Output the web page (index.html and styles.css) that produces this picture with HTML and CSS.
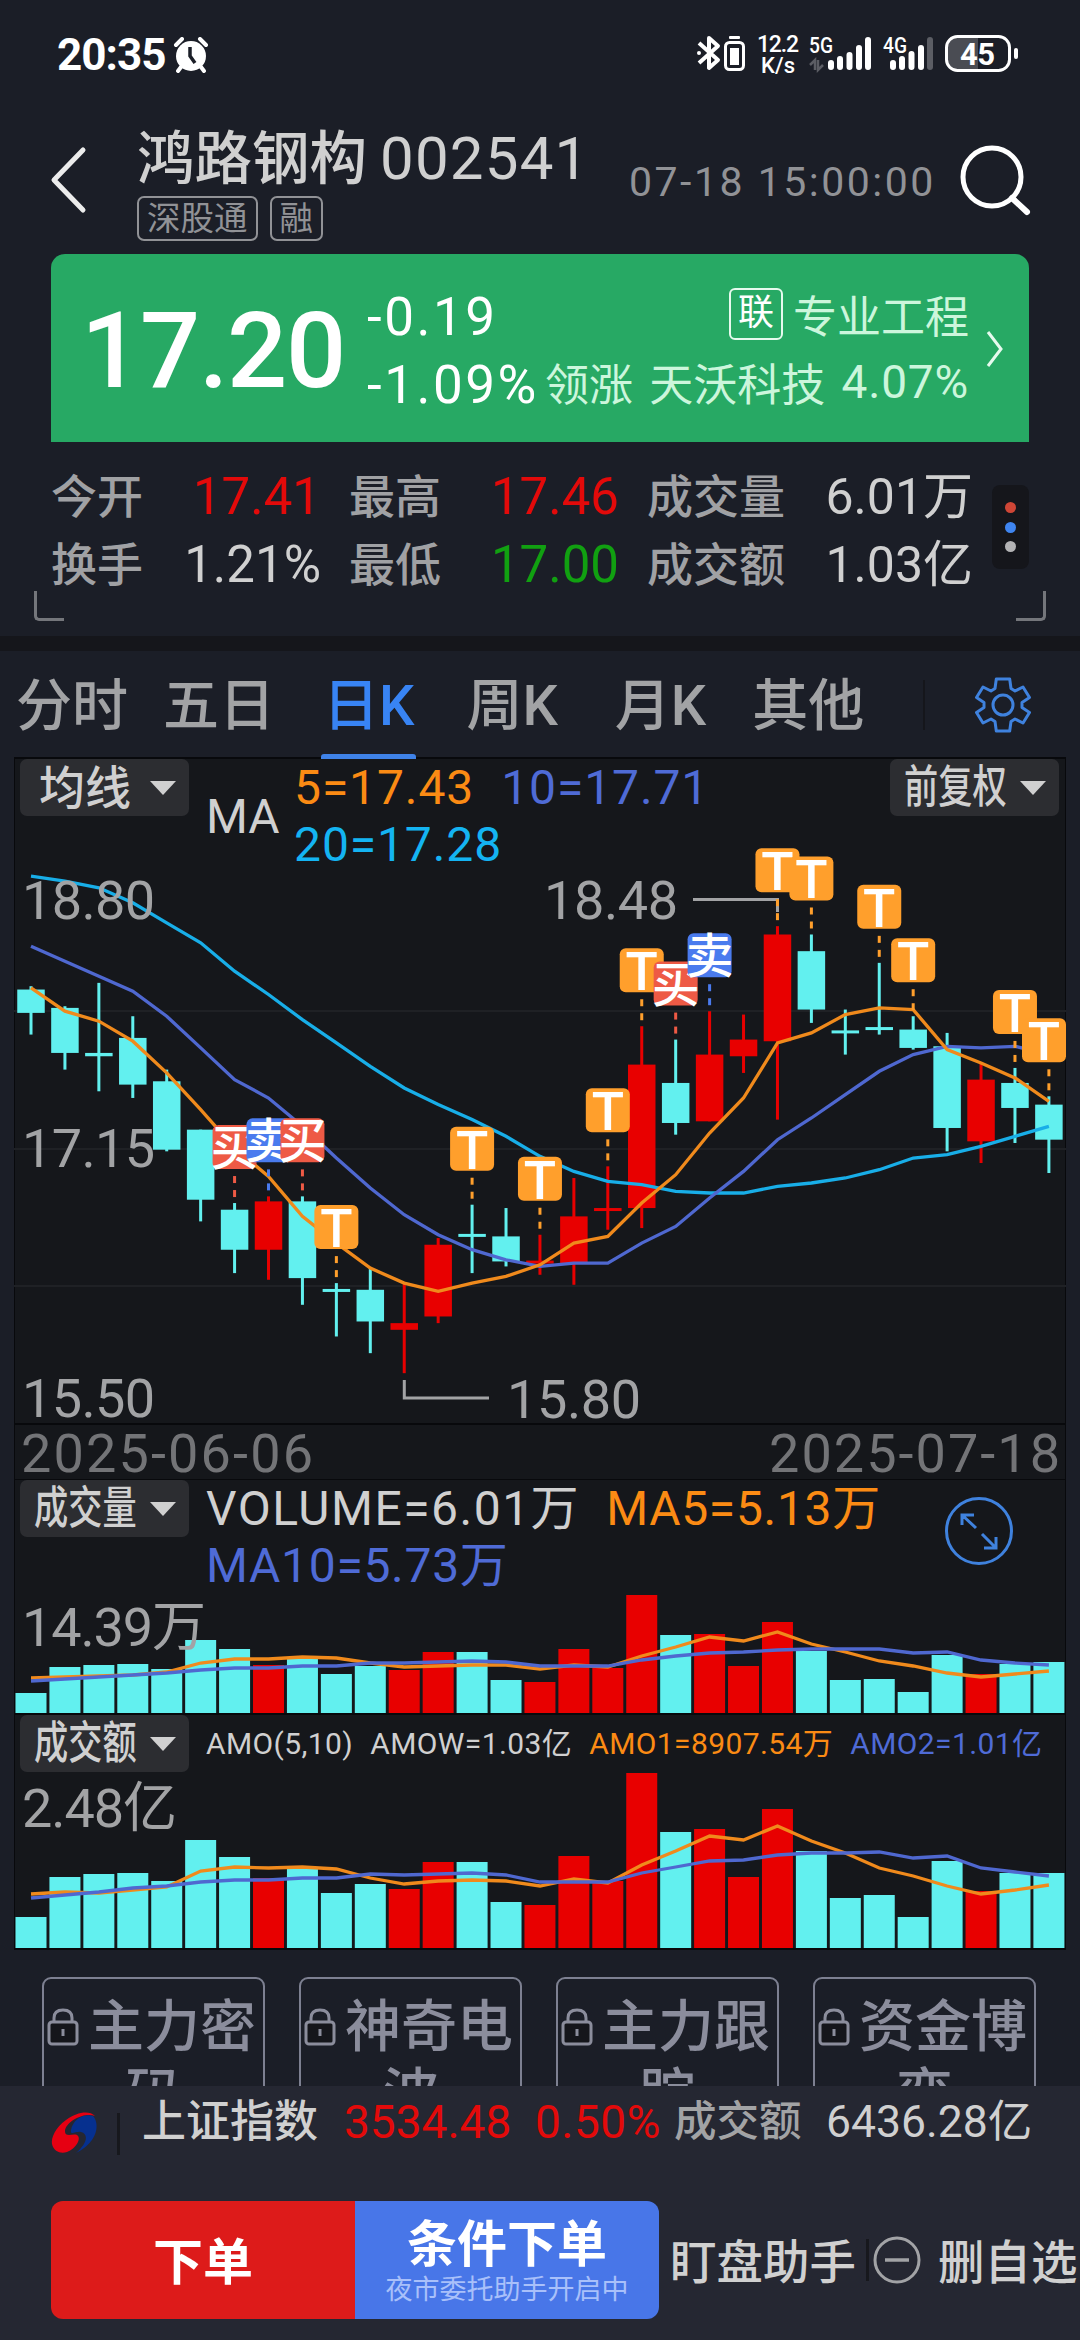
FILE: index.html
```html
<!DOCTYPE html>
<html lang="zh-CN">
<head>
    <meta charset="UTF-8">
    <meta name="viewport" content="width=device-width, initial-scale=1.0">
    <title>鸿路钢构 002541</title>
    <link rel="stylesheet" href="styles.css">
</head>
<body>

    <div class="status-bar">
        <span class="time">20:35</span>
        <svg class="alarm" width="36" height="36" viewBox="0 0 36 36">
            <circle cx="18" cy="19" r="15" fill="#fff"/>
            <path d="M3 8 L9 2 M33 8 L27 2 M8 30 L5 34 M28 30 L31 34" stroke="#fff" stroke-width="4" stroke-linecap="round"/>
            <path d="M17 10 V19 L22 26" stroke="#1b1e27" stroke-width="3.5" fill="none"/>
        </svg>
        <svg class="status-icons" width="340" height="50" viewBox="690 28 340 50">
            <path d="M699 43 L718 60 L709 68 V38 L718 46 L699 63" fill="none" stroke="#fff" stroke-width="4" stroke-linejoin="round"/>
            <circle cx="699" cy="53" r="2" fill="#fff"/>
            <rect x="725.500" y="42.500" width="18" height="27" rx="4" fill="none" stroke="#fff" stroke-width="3"/>
            <rect x="730" y="48" width="9" height="17" fill="#fff"/>
            <rect x="729" y="36" width="11" height="3" rx="1" fill="#fff"/>
            <text x="757" y="52" font-size="23" textLength="42">12.2</text>
            <text x="761" y="73" font-size="22" textLength="34">K/s</text>
            <text x="809" y="53" font-size="22" textLength="24" lengthAdjust="spacingAndGlyphs">5G</text>
            <path d="M815 70 V60 L810 65 M818 60 V70 L823 65" fill="none" stroke="#5b5d64" stroke-width="2.500"/>
            <g stroke="#fff" stroke-width="6" stroke-linecap="round">
                <path d="M831 63 V67 M840 59 V67 M849.500 55 V67 M859 48 V67 M868 40 V67"/>
                <path d="M893 63 V67 M902 59 V67 M911.500 54 V67 M921 48 V67"/>
                <path d="M930 40 V67" stroke="#5b5d64"/>
            </g>
            <text x="883" y="53" font-size="22" textLength="24" lengthAdjust="spacingAndGlyphs">4G</text>
            <path d="M978 37 H957 Q947 37 947 46 V61 Q947 70 957 70 H978 Z" fill="#4a4c53"/>
            <rect x="946.500" y="36.500" width="63" height="34" rx="11" fill="none" stroke="#fff" stroke-width="3"/>
            <rect x="1014" y="48" width="4" height="11" rx="2" fill="#fff"/>
            <text x="960" y="65" font-size="31" font-weight="700" textLength="35">45</text>
        </svg>
    </div>

    <header class="header">
        <svg class="back" width="40" height="68" viewBox="0 0 40 68">
            <path d="M35 4 L6 34 L35 64" fill="none" stroke="#ececec" stroke-width="5" stroke-linecap="round" stroke-linejoin="round"/>
        </svg>
        <div class="stock">
            <div class="stock-name">鸿路钢构<span class="stock-code">002541</span></div>
            <div class="tags"><span class="tag">深股通</span><span class="tag">融</span></div>
        </div>
        <span class="quote-time">07-18 15:00:00</span>
        <svg class="search" width="74" height="74" viewBox="0 0 74 74">
            <circle cx="34" cy="33" r="29" fill="none" stroke="#fff" stroke-width="5"/>
            <path d="M54 54 L69 68" stroke="#fff" stroke-width="6" stroke-linecap="round"/>
        </svg>
    </header>

    <section class="price-card">
        <div class="price">17.20</div>
        <div class="change">
            <div>-0.19</div>
            <div>-1.09%</div>
        </div>
        <div class="sector">
            <div class="sector-row"><span class="link-tag">联</span>专业工程</div>
            <div class="sector-row"><span>领涨</span><span>天沃科技</span><span class="num">4.07%</span></div>
        </div>
        <svg class="arrow" width="20" height="40" viewBox="0 0 20 40">
            <path d="M3 3 L16 20 L3 37" fill="none" stroke="#e6faee" stroke-width="3"/>
        </svg>
    </section>

    <section class="stats">
        <div class="stats-grid">
            <span class="label">今开</span><span class="value up">17.41</span>
            <span class="label">最高</span><span class="value up">17.46</span>
            <span class="label">成交量</span><span class="value last">6.01万</span>
            <span class="label">换手</span><span class="value">1.21%</span>
            <span class="label">最低</span><span class="value down">17.00</span>
            <span class="label">成交额</span><span class="value last">1.03亿</span>
        </div>
        <div class="more"><i class="dot red"></i><i class="dot blue"></i><i class="dot"></i></div>
        <i class="corner left"></i>
        <i class="corner right"></i>
    </section>

    <nav class="tabs">
        <a>分时</a>
        <a>五日</a>
        <a class="active">日K</a>
        <a>周K</a>
        <a>月K</a>
        <a>其他</a>
        <i class="tabs-line"></i>
        <svg class="gear" width="60" height="60" viewBox="-30 -30 60 60">
            <path d="M-6.700 -26 L6.700 -26 L8 -16.500 L12 -14 L20 -18 L26.500 -7.500 L19 -2.500 L19 2.500 L26.500 7.500 L20 18 L12 14 L8 16.500 L6.700 26 L-6.700 26 L-8 16.500 L-12 14 L-20 18 L-26.500 7.500 L-19 2.500 L-19 -2.500 L-26.500 -7.500 L-20 -18 L-12 -14 L-8 -16.500 Z" fill="none" stroke="#3f82de" stroke-width="3" stroke-linejoin="round"/>
            <circle r="10" fill="none" stroke="#3f82de" stroke-width="3"/>
        </svg>
    </nav>

    <main class="charts">
        <section class="panel kline">
            <svg class="plot" id="kline" viewBox="14 759 1052 721"></svg>
            <div class="legend">
                <button class="picker">均线<i class="caret"></i></button>
                <span class="legend-name">MA</span>
                <div class="legend-values">
                    <span class="orange">5=17.43</span>
                    <span class="indigo">10=17.71</span>
                    <span class="sky">20=17.28</span>
                </div>
                <button class="picker narrow right"><span>前复权</span><i class="caret"></i></button>
            </div>
        </section>

        <section class="panel volume">
            <svg class="plot" id="volume" viewBox="14 1480 1052 235"></svg>
            <div class="legend">
                <button class="picker narrow"><span>成交量</span><i class="caret"></i></button>
                <div class="legend-values wide">
                    <span class="total">VOLUME=6.01万</span>
                    <span class="orange">MA5=5.13万</span>
                    <span class="indigo">MA10=5.73万</span>
                </div>
                <svg class="expand" width="70" height="70" viewBox="-35 -35 70 70">
                    <g fill="none" stroke="#3f82de" stroke-width="3">
                        <circle r="32.500"/>
                        <path d="M-3 -3 L-17 -16 M-17 -6 V-16 H-5 M3 3 L17 17 M17 6 V17 H5"/>
                    </g>
                </svg>
            </div>
        </section>

        <section class="panel amount">
            <svg class="plot" id="amount" viewBox="14 1715 1052 235"></svg>
            <div class="legend">
                <button class="picker narrow"><span>成交额</span><i class="caret"></i></button>
                <div class="legend-small">
                    <span>AMO(5,10)</span>
                    <span>AMOW=1.03亿</span>
                    <span class="orange">AMO1=8907.54万</span>
                    <span class="indigo">AMO2=1.01亿</span>
                </div>
            </div>
        </section>
    </main>

    <section class="locked">
        <div class="lock-item"><svg class="lock" width="32" height="38" viewBox="0 0 32 38"><path d="M7 15 V10 Q7 2 16 2 Q25 2 25 10 V15"/><rect x="2" y="14" width="28" height="22" rx="3"/><path d="M16 21 V28"/></svg>主力密码</div>
        <div class="lock-item"><svg class="lock" width="32" height="38" viewBox="0 0 32 38"><path d="M7 15 V10 Q7 2 16 2 Q25 2 25 10 V15"/><rect x="2" y="14" width="28" height="22" rx="3"/><path d="M16 21 V28"/></svg>神奇电波</div>
        <div class="lock-item"><svg class="lock" width="32" height="38" viewBox="0 0 32 38"><path d="M7 15 V10 Q7 2 16 2 Q25 2 25 10 V15"/><rect x="2" y="14" width="28" height="22" rx="3"/><path d="M16 21 V28"/></svg>主力跟踪</div>
        <div class="lock-item"><svg class="lock" width="32" height="38" viewBox="0 0 32 38"><path d="M7 15 V10 Q7 2 16 2 Q25 2 25 10 V15"/><rect x="2" y="14" width="28" height="22" rx="3"/><path d="M16 21 V28"/></svg>资金博弈</div>
    </section>

    <footer class="footer">
        <div class="index-row">
            <svg class="logo" width="48" height="46" viewBox="0 0 48 46">
                <path d="M25 43 C36 34 38 24 30 22 C25 21 19 26 20 20 C22 9 33 3 42 6 C48 12 49 31 25 43 Z" fill="#06308f"/>
                <path d="M44 6 C38 0 26 2 15 10 C4 18 0 28 1 34 C3 42 10 44 16 42 C25 39 31 28 26 25 C22 23 14 28 14 21 C15 12 32 2 44 6 Z" fill="#e60012"/>
            </svg>
            <i class="v-line"></i>
            <span class="index-name">上证指数</span>
            <span class="index-value">3534.48</span>
            <span class="index-pct">0.50%</span>
            <span class="index-label">成交额</span>
            <span class="index-amount">6436.28亿</span>
        </div>
        <div class="action-row">
            <button class="order">下单</button>
            <button class="cond-order">条件下单<small>夜市委托助手开启中</small></button>
            <span class="action">盯盘助手</span>
            <i class="v-line"></i>
            <svg class="minus" width="48" height="48" viewBox="-24 -24 48 48">
                <circle r="22" fill="none" stroke="#a2a3a6" stroke-width="3"/>
                <path d="M-12 0 H12" stroke="#a2a3a6" stroke-width="3.500"/>
            </svg>
            <span class="action">删自选</span>
        </div>
    </footer>

    <script src="chart.js"></script>
</body>
</html>
```
FILE: chart.js
```js
const UP = "#e80000";
const DOWN = "#62f0ef";

// open, close, high, low
const candles = [
    [18.10, 17.96, 18.12, 17.83], [17.99, 17.72, 18.00, 17.62], [17.72, 17.70, 18.14, 17.49],
    [17.81, 17.53, 17.94, 17.45], [17.55, 17.14, 17.62, 17.13], [17.26, 16.84, 17.26, 16.71],
    [16.78, 16.54, 16.82, 16.40], [16.54, 16.83, 16.86, 16.36], [16.83, 16.37, 16.86, 16.21],
    [16.305, 16.295, 16.34, 16.02], [16.30, 16.11, 16.43, 15.92], [16.06, 16.10, 16.34, 15.80],
    [16.14, 16.57, 16.61, 16.10], [16.635, 16.625, 16.81, 16.40], [16.62, 16.47, 16.79, 16.44],
    [16.465, 16.475, 16.63, 16.39], [16.46, 16.74, 16.97, 16.33], [16.78, 16.79, 17.04, 16.66],
    [16.79, 17.65, 17.88, 16.67], [17.54, 17.30, 17.80, 17.23], [17.31, 17.71, 17.97, 17.31],
    [17.70, 17.80, 17.95, 17.60], [17.79, 18.43, 18.48, 17.32], [18.33, 17.98, 18.43, 17.90],
    [17.855, 17.845, 17.98, 17.71], [17.875, 17.87, 18.26, 17.83], [17.86, 17.75, 17.94, 17.74],
    [17.76, 17.27, 17.84, 17.13], [17.19, 17.56, 17.66, 17.06], [17.54, 17.39, 17.63, 17.18],
    [17.41, 17.20, 17.46, 17.00]
];

const ma5 = [18.11, 17.97, 17.91, 17.79, 17.60, 17.38, 17.15, 16.98, 16.74, 16.58, 16.43, 16.34, 16.29, 16.34, 16.38, 16.45, 16.58, 16.62, 16.82, 16.99, 17.24, 17.45, 17.78, 17.84, 17.95, 17.99, 17.98, 17.74, 17.66, 17.57, 17.43];
const ma10 = [18.36, 18.27, 18.18, 18.09, 17.94, 17.75, 17.56, 17.45, 17.28, 17.09, 16.91, 16.75, 16.63, 16.54, 16.48, 16.44, 16.46, 16.46, 16.58, 16.68, 16.85, 17.01, 17.20, 17.33, 17.47, 17.61, 17.71, 17.76, 17.75, 17.76, 17.71];
const ma20 = [18.78, 18.75, 18.71, 18.62, 18.50, 18.38, 18.21, 18.07, 17.92, 17.78, 17.64, 17.51, 17.41, 17.32, 17.22, 17.10, 17.01, 16.95, 16.93, 16.89, 16.88, 16.88, 16.92, 16.94, 16.97, 17.02, 17.09, 17.11, 17.16, 17.22, 17.28];

// trade marks by candle index
const marks = [
    [6, "买"], [7, "卖"], [8, "买"], [9, "T"], [13, "T"], [15, "T"], [17, "T"], [18, "T"],
    [19, "买"], [20, "卖"], [22, "T"], [23, "T"], [25, "T"], [26, "T"], [29, "T"], [30, "T"]
];
const markColors = { "T": "#ff9f2c", "买": "#ee5a45", "卖": "#4a7bee" };

// bar heights in px
const vol = [20, 46, 48, 49, 44, 73, 64, 48, 54, 39, 47, 43, 61, 61, 33, 31, 64, 45, 118, 78, 79, 47, 91, 62, 33, 34, 21, 58, 39, 49, 51];
const volMa5 = [35, 36, 37, 38, 41, 50, 54, 54, 56, 55, 50, 46, 47, 48, 48, 44, 48, 46, 57, 66, 76, 72, 81, 69, 61, 52, 47, 40, 36, 39, 42];
const volMa10 = [32, 34, 36, 38, 40, 43, 45, 45, 47, 47, 50, 50, 51, 52, 51, 47, 47, 47, 53, 57, 60, 61, 63, 64, 64, 64, 60, 61, 53, 50, 48];
const amo = [31, 71, 74, 75, 67, 108, 91, 70, 80, 55, 64, 59, 86, 86, 46, 43, 92, 67, 175, 116, 119, 71, 139, 97, 50, 53, 31, 87, 57, 75, 75];
const amoMa5 = [54, 56, 55, 58, 61, 77, 81, 80, 81, 79, 70, 64, 67, 68, 67, 62, 69, 65, 83, 97, 112, 108, 122, 107, 95, 80, 72, 62, 54, 58, 63];
const amoMa10 = [50, 53, 56, 60, 62, 66, 68, 68, 70, 70, 74, 73, 74, 75, 73, 66, 66, 66, 75, 81, 87, 88, 93, 95, 95, 96, 90, 92, 80, 76, 72];

const x = i => 31 + i * 33.93;
const y = p => 1148 - (p - 17.15) * 166.8;
const isUp = i => candles[i][1] > candles[i][0];

function rect(left, top, w, h, fill, rx = 0) {
    return `<rect x="${left}" y="${top}" width="${w}" height="${h}" rx="${rx}" fill="${fill}"/>`;
}

function line(values, toY, color) {
    const pts = values.map((v, i) => `${x(i).toFixed(1)},${toY(v).toFixed(1)}`).join(" ");
    return `<polyline points="${pts}" fill="none" stroke="${color}" stroke-width="3.3"/>`;
}

function label(left, base, len, text, cls = "axis") {
    return `<text class="${cls}" x="${left}" y="${base}" textLength="${len}">${text}</text>`;
}

function drawKline() {
    let out = "";
    [1010, 1148, 1285].forEach(g => out += rect(14, g, 1052, 2, "#1f2125"));
    [1423, 1479].forEach(g => out += rect(14, g, 1052, 2, "#08090c"));

    candles.forEach(([open, close, high, low], i) => {
        const color = isUp(i) ? UP : DOWN;
        const top = y(Math.max(open, close));
        out += rect(x(i) - 1.5, y(high), 3, y(low) - y(high), color);
        out += rect(x(i) - 13.75, top, 27.5, Math.max(3, y(Math.min(open, close)) - top), color);
    });

    out += line(ma20, y, "#18aee8") + line(ma10, y, "#4f68d0") + line(ma5, y, "#f08a1c");

    out += label(22, 919, 133, "18.80") + label(22, 1167, 133, "17.15") + label(22, 1417, 133, "15.50");
    out += label(544, 919, 134, "18.48") + label(507, 1418, 134, "15.80");
    out += `<path d="M693 899.5 H777.5 V912 M404.300 1380 V1398 H489" fill="none" stroke="#a2a3a5" stroke-width="3"/>`;
    out += label(21, 1472, 292, "2025-06-06", "axis date") + label(769, 1472, 291, "2025-07-18", "axis date");

    marks.forEach(([i, type]) => {
        const cx = Math.min(x(i), 1044);
        const bottom = y(candles[i][2]) - 34;
        const color = markColors[type];
        out += rect(x(i) - 1.5, bottom + 7, 3, 7, color) + rect(x(i) - 1.5, bottom + 21, 3, 7, color);
        out += rect(cx - 22, bottom - 44, 44, 44, color, 6);
        out += type === "T"
            ? `<text class="mark" x="${cx}" y="${bottom - 2}">T</text>`
            : `<text class="mark trade" x="${cx}" y="${bottom - 4}">${type}</text>`;
    });
    document.getElementById("kline").innerHTML = out;
}

function drawBars(id, base, bars, five, ten, text) {
    const toY = h => base - h;
    let out = rect(14, base, 1052, 2, "#08090c");
    bars.forEach((h, i) => out += rect(x(i) - 15.5, base - h, 31, h, isUp(i) ? UP : DOWN));
    out += line(five, toY, "#f08a1c") + line(ten, toY, "#4f68d0") + text;
    document.getElementById(id).innerHTML = out;
}

drawKline();
drawBars("volume", 1713, vol, volMa5, volMa10, label(22, 1646, 184, "14.39万"));
drawBars("amount", 1948, amo, amoMa5, amoMa10, label(22, 1827, 155, "2.48亿"));
```
FILE: styles.css
```css
* {
    margin: 0;
    padding: 0;
    box-sizing: border-box;
}

body {
    width: 1080px;
    height: 2340px;
    overflow: hidden;
    display: flex;
    flex-direction: column;
    background-color: #1b1e27;
    color: #d0d0d0;
    font-family: Roboto, "Noto Sans CJK SC", sans-serif;
}

button {
    border: none;
    font-family: inherit;
    color: inherit;
}

svg {
    display: block;
    flex: none;
}

/* status bar */
.status-bar {
    height: 110px;
    padding: 0 50px 0 57px;
    display: flex;
    align-items: center;
    color: #fff;
}

.time {
    width: 116px;
    font-size: 44px;
    font-weight: 700;
    letter-spacing: -1px;
}

.status-icons {
    margin-left: auto;
    font-weight: 500;
    margin-top: -4px;
}

.status-icons text {
    fill: #fff;
}

/* header */
.header {
    height: 144px;
    padding: 15px 47px 0 48px;
    display: flex;
}

.back {
    margin-top: 21px;
}

.stock {
    width: 541px;
    padding-left: 49px;
}

.stock-name {
    height: 71px;
    line-height: 67px;
    font-size: 57.5px;
    font-weight: 500;
    white-space: nowrap;
}

.stock-code {
    margin-left: 13px;
    font-size: 60px;
    font-weight: 400;
    letter-spacing: 1.2px;
}

.tags {
    display: flex;
    gap: 12px;
}

.tag {
    height: 45px;
    padding: 0 8px;
    line-height: 41px;
    font-size: 33.5px;
    color: #919296;
    border: 2px solid #919296;
    border-radius: 7px;
}

.quote-time {
    width: 329px;
    line-height: 114px;
    font-size: 41px;
    letter-spacing: 2.5px;
    color: #919296;
    white-space: nowrap;
}

.search {
    margin-top: 19px;
}

/* price card */
.price-card {
    width: 978px;
    height: 188px;
    margin: 0 auto;
    padding-left: 30px;
    display: flex;
    border-radius: 14px 14px 0 0;
    background-color: #27a964;
    color: #fff;
}

.price {
    width: 286px;
    font-size: 106px;
    font-weight: 500;
    line-height: 194px;
    letter-spacing: -1.3px;
}

.change {
    width: 178px;
    padding-top: 29px;
    font-size: 53px;
    line-height: 68px;
    letter-spacing: 2.5px;
}

.sector {
    width: 424px;
    padding-top: 26px;
    color: #ccf6dc;
    font-size: 44px;
}

.sector-row {
    height: 68px;
    display: flex;
    align-items: center;
    justify-content: space-between;
}

.sector-row:first-child {
    justify-content: flex-end;
}

.link-tag {
    width: 54px;
    height: 52px;
    margin-right: 10px;
    border: 2.5px solid #e6faee;
    border-radius: 6px;
    color: #fff;
    font-size: 36px;
    line-height: 47px;
    text-align: center;
}

.num {
    font-size: 46px;
    letter-spacing: 0.8px;
}

.arrow {
    margin: 75px 0 0 16px;
}

/* stats */
.stats {
    position: relative;
    height: 209px;
    padding: 21px 51px 0;
    display: flex;
    justify-content: space-between;
    border-bottom: 15px solid #15161b;
}

.stats-grid {
    display: grid;
    grid-template-columns: 94px 204px 93px 205px 142px 184px;
    grid-auto-rows: 68px;
    align-items: center;
    line-height: 68px;
}

.label {
    font-size: 46px;
    color: #a0a1a4;
    font-weight: 500;
}

.value {
    padding-right: 28px;
    font-size: 51px;
    text-align: right;
}

.value.last {
    padding-right: 0;
    font-size: 50px;
}

.up {
    color: #e30a0a;
}

.down {
    color: #11a011;
}

.more {
    width: 37px;
    height: 84px;
    margin-top: 22px;
    padding: 17px 0;
    display: flex;
    flex-direction: column;
    align-items: center;
    justify-content: space-between;
    border-radius: 8px;
    background-color: #15161b;
}

.dot {
    width: 11px;
    height: 11px;
    border-radius: 50%;
    background-color: #b3b3b5;
}

.dot.red {
    background-color: #cf4636;
}

.dot.blue {
    background-color: #3f85f0;
}

.corner {
    position: absolute;
    bottom: 15px;
    width: 30px;
    height: 30px;
    border-bottom: 3px solid #74767b;
}

.corner.left {
    left: 34px;
    border-left: 3px solid #74767b;
    border-bottom-left-radius: 5px;
}

.corner.right {
    right: 34px;
    border-right: 3px solid #74767b;
    border-bottom-right-radius: 5px;
}

/* period tabs */
.tabs {
    height: 108px;
    padding-left: 16px;
    display: flex;
    font-size: 56px;
    font-weight: 500;
    color: #a2a3a5;
}

.tabs a {
    position: relative;
    margin-right: 35px;
    line-height: 110px;
    height: 108px;
    white-space: nowrap;
}

.tabs a:nth-child(2) {
    margin-right: 48px;
}

.tabs a:nth-child(3) {
    margin-right: 52px;
}

.tabs a:nth-child(4) {
    margin-right: 57px;
}

.tabs a:nth-child(5) {
    margin-right: 46px;
}

.tabs .active {
    color: #3884f4;
}

.tabs .active::after {
    content: "";
    position: absolute;
    left: -2px;
    right: -2px;
    bottom: 0;
    height: 5px;
    border-radius: 3px 3px 0 0;
    background-color: #3f82e8;
}

.tabs-line {
    width: 2px;
    height: 50px;
    margin: 29px 0 0 auto;
    background-color: #15161b;
}

.gear {
    margin: 24px 47px 0 48px;
}

/* charts */
.charts {
    margin: 0 14px;
    border: 1px solid #08090c;
    border-width: 0 1px;
    background-color: #15171b;
    box-shadow: 0 -2px 0 #08090c;
}

.panel {
    position: relative;
}

.kline {
    height: 721px;
}

.volume,
.amount {
    height: 235px;
}

.plot {
    position: absolute;
    top: 0;
    left: -1px;
    width: 1052px;
    height: 100%;
}

.axis {
    font-size: 54px;
    fill: #a2a3a5;
}

.date {
    fill: #737477;
}

.mark {
    font-size: 53px;
    fill: #fff;
    font-weight: 500;
    text-anchor: middle;
}

.mark.trade {
    font-size: 48px;
    font-weight: 500;
}

.legend {
    position: relative;
    display: flex;
    font-size: 48px;
    line-height: 57px;
    padding: 0 6px 0 5px;
}

.picker {
    width: 169px;
    height: 57px;
    padding: 0 13px 0 19px;
    display: flex;
    align-items: center;
    justify-content: space-between;
    flex: none;
    border-radius: 7px;
    background-color: #2c2d31;
    font-size: 46px;
    font-weight: 500;
    line-height: 50px;
}

.picker.narrow {
    padding-left: 14px;
}

.narrow span {
    width: 102px;
    font-size: 45px;
    white-space: nowrap;
    transform: scaleX(0.76);
    transform-origin: left;
}

.caret {
    border: 13px solid transparent;
    border-top: 14px solid #d0d0d0;
    border-bottom: none;
}

.legend-name {
    width: 88px;
    padding: 29px 0 0 17px;
}

.legend-values {
    width: 440px;
    padding-left: 17px;
    display: flex;
    flex-wrap: wrap;
    column-gap: 27px;
    letter-spacing: 0.9px;
}

.legend-values.wide {
    width: 740px;
    letter-spacing: 0.7px;
}

.legend-values .total {
    margin-right: -1px;
    letter-spacing: 1.5px;
}

.picker.right {
    margin-left: auto;
}

.orange {
    color: #fb8b14;
}

.indigo {
    color: #4f6bd6;
}

.sky {
    color: #14b4f2;
}

.expand {
    margin: 16px 0 0 15px;
}

.legend-small {
    padding-left: 17px;
    display: flex;
    gap: 17px;
    font-size: 30px;
    letter-spacing: 0.4px;
    white-space: nowrap;
}

/* locked indicators */
.locked {
    height: 136px;
    flex: none;
    padding: 27px 44px 0 42px;
    display: flex;
    justify-content: space-between;
    overflow: hidden;
}

.lock-item {
    width: 223px;
    height: 180px;
    padding-top: 14px;
    border: 2px solid #7d8091;
    border-radius: 9px;
    font-size: 56px;
    font-weight: 500;
    line-height: 68px;
    text-align: center;
    color: #8b8d9c;
}

.lock {
    display: inline-block;
    margin: 0 9px 0 -4px;
    fill: none;
    stroke: #8b8d9c;
    stroke-width: 3;
}

.lock rect {
    fill: #15161b;
}

/* footer */
.footer {
    flex: 1;
    background-color: #252732;
}

.index-row {
    height: 115px;
    padding-left: 51px;
    display: flex;
    line-height: 72px;
    font-size: 44px;
    white-space: nowrap;
}

.logo {
    margin-top: 24px;
}

.v-line {
    width: 3px;
    height: 42px;
    background-color: #17181d;
}

.index-row .v-line {
    margin: 27px 22px 0 18px;
}

.index-name {
    width: 202px;
    font-weight: 500;
}

.index-value,
.index-pct {
    font-size: 46px;
    color: #e30a0a;
}

.index-value {
    width: 191px;
}

.index-pct {
    width: 139px;
    letter-spacing: 0.5px;
}

.index-label {
    width: 152px;
    font-size: 42.5px;
    font-weight: 500;
    color: #a2a3a5;
}

.index-amount {
    font-size: 44.5px;
}

.action-row {
    height: 118px;
    padding-left: 51px;
    display: flex;
    align-items: center;
    white-space: nowrap;
    font-size: 46.5px;
    font-weight: 500;
}

.order,
.cond-order {
    width: 304px;
    height: 118px;
    flex: none;
    color: #fff;
    font-size: 50px;
    font-weight: 700;
}

.order {
    padding-bottom: 4px;
    border-radius: 12px 0 0 12px;
    background-color: #dd1b1a;
}

.cond-order {
    padding-top: 5px;
    border-radius: 0 12px 12px 0;
    background-color: #4876e8;
    line-height: 54px;
}

.cond-order small {
    display: block;
    font-size: 27px;
    line-height: 36px;
    font-weight: 400;
    color: #a9c0fa;
}

.action-row .v-line {
    margin: 0 4px 0 10px;
}

.action {
    margin-left: 11px;
    padding-bottom: 4px;
}

.minus + .action {
    margin-left: 17px;
}
```
